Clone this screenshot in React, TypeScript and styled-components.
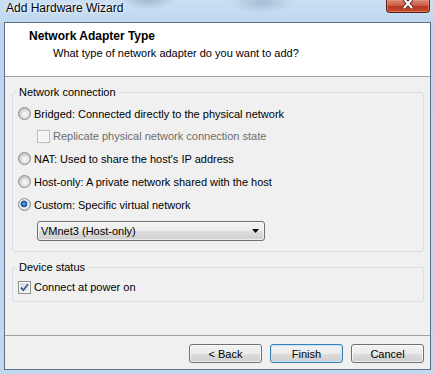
import * as React from 'react';
import styled, { createGlobalStyle } from 'styled-components';

const GlobalStyle = createGlobalStyle`
  * { box-sizing: border-box; }
  html, body { margin: 0; padding: 0; }
  body { width: 434px; height: 374px; overflow: hidden; background: #c2d9f0; }
`;

const Frame = styled.div`
  width: 434px;
  height: 374px;
  display: flex;
  flex-direction: column;
  font-family: 'Liberation Sans', Arial, sans-serif;
  color: #000;
  background:
    radial-gradient(ellipse 34px 12px at 148px 0px, rgba(70, 95, 115, 0.3), transparent 80%),
    radial-gradient(ellipse 40px 14px at 262px 2px, rgba(60, 90, 110, 0.25), transparent 80%),
    linear-gradient(180deg, #cadff4 0%, #bdd6ef 26px, #c0d8f0 100%);
`;

const TitleBar = styled.div`
  height: 22px;
  flex: none;
  display: flex;
  justify-content: space-between;
  align-items: flex-start;
`;

const Title = styled.span`
  margin: 1px 0 0 6px;
  font-size: 12px;
  line-height: 15px;
  text-shadow: 0 0 5px rgba(255, 255, 255, 0.9), 0 0 2px rgba(255, 255, 255, 0.9);
`;

const CloseButton = styled.div`
  width: 44px;
  height: 13px;
  margin-right: 4px;
  display: flex;
  align-items: flex-start;
  justify-content: center;
  border: 1px solid #5e2218;
  border-top: none;
  border-radius: 0 0 4px 4px;
  background: linear-gradient(180deg, #d98570 0%, #cc5f47 45%, #b8381f 52%, #c44a30 100%);
  box-shadow: inset 0 0 0 1px rgba(240, 160, 140, 0.5);
`;

const Client = styled.div`
  flex: 1;
  margin: 0 3px 4px 4px;
  border: 1px solid #5e6f82;
  background: #f0f0f0;
  display: flex;
  flex-direction: column;
`;

const Header = styled.div`
  height: 54px;
  flex: none;
  background: #fff;
  border-bottom: 1px solid #a0a0a0;
  padding: 6px 0 0 24px;
`;

const HeaderTitle = styled.div`
  font-size: 12px;
  line-height: 15px;
  font-weight: bold;
`;

const HeaderSub = styled.div`
  margin: 2px 0 0 24px;
  font-size: 11px;
  line-height: 14px;
`;

const Body = styled.div`
  flex: 1;
  padding: 8px 6px 0 7px;
  display: flex;
  flex-direction: column;
`;

const Group = styled.fieldset<{ $bottom: number }>`
  margin: 0 0 8px 0;
  min-width: 0;
  border: 1px solid #d5dfe5;
  border-radius: 3px;
  padding: 3px 6px ${p => p.$bottom}px 5px;
  display: flex;
  flex-direction: column;
`;

const Legend = styled.legend`
  margin-left: -2px;
  padding: 0 3px;
  font-size: 11px;
  line-height: 14px;
`;

const Row = styled.label<{ $height: number; $indent?: number; $disabled?: boolean }>`
  height: ${p => p.$height}px;
  display: flex;
  align-items: center;
  gap: 3px;
  padding-left: ${p => p.$indent ?? 0}px;
  font-size: 11px;
  line-height: 14px;
  color: ${p => (p.$disabled ? '#6d6d6d' : '#000')};
`;

const RadioDot = styled.span<{ $checked?: boolean }>`
  width: 13px;
  height: 13px;
  flex: none;
  border-radius: 50%;
  border: 1px solid #8a8c8e;
  background: ${p =>
    p.$checked
      ? 'radial-gradient(circle at 45% 45%, #8fc3f0 0, #2f73c0 1.6px, #1c4f93 3px, #dfe7ee 3.7px, #f4f4f4 4.3px, #d4d4d4 5.5px)'
      : 'radial-gradient(circle at 55% 58%, #fbfbfb 0, #f0f0f0 2px, #d6d6d6 4.6px, #c8c8c8 5.5px)'};
`;

const CheckBox = styled.span<{ $disabled?: boolean }>`
  width: 13px;
  height: 13px;
  flex: none;
  display: flex;
  align-items: center;
  justify-content: center;
  border: 1px solid ${p => (p.$disabled ? '#bcbcbc' : '#8e8f8f')};
  background: ${p => (p.$disabled ? '#f4f4f4' : 'linear-gradient(135deg, #d5d9de 0%, #f4f4f4 100%)')};
  box-shadow: inset 0 0 0 1px ${p => (p.$disabled ? '#fafafa' : '#f6f6f6')};
`;

const Select = styled.div`
  width: 228px;
  height: 20px;
  margin: 5px 0 0 19px;
  padding: 0 5px 0 3px;
  display: flex;
  align-items: center;
  justify-content: space-between;
  border: 1px solid #707070;
  border-radius: 3px;
  background: linear-gradient(180deg, #f2f2f2 0%, #ebebeb 50%, #dddddd 51%, #cfcfcf 100%);
  box-shadow: inset 0 0 0 1px rgba(255, 255, 255, 0.6);
  font-size: 11px;
  line-height: 14px;
`;

const Footer = styled.div`
  height: 34px;
  flex: none;
  border-top: 1px solid #a0a0a0;
  padding: 8px 6px 0 0;
  display: flex;
  justify-content: flex-end;
  align-items: flex-start;
  gap: 8px;
`;

const Button = styled.button<{ $default?: boolean }>`
  width: 73px;
  height: 19px;
  padding: 0;
  border: 1px solid ${p => (p.$default ? '#3c7fb1' : '#707070')};
  border-radius: 3px;
  background: linear-gradient(180deg, #f2f2f2 0%, #ebebeb 50%, #dddddd 51%, #cfcfcf 100%);
  box-shadow: inset 0 0 0 1px ${p => (p.$default ? 'rgba(190, 228, 250, 0.95)' : 'rgba(255, 255, 255, 0.7)')};
  font-family: 'Liberation Sans', Arial, sans-serif;
  font-size: 11px;
  line-height: 14px;
  color: #000;
`;

const Radio: React.FC<{ checked?: boolean; children: React.ReactNode }> = ({ checked, children }) => (
  <Row $height={23}>
    <RadioDot $checked={checked} />
    <span>{children}</span>
  </Row>
);

const Tick = () => (
  <svg width="9" height="9" viewBox="0 0 9 9">
    <path d="M1 4.6 L3.4 7.2 L8 1.2" fill="none" stroke="#3f5695" strokeWidth="1.7" />
  </svg>
);

const App: React.FC = () => (
  <Frame>
    <GlobalStyle />
    <TitleBar>
      <Title>Add Hardware Wizard</Title>
      <CloseButton>
        <svg width="14" height="10" viewBox="0 0 14 10">
          <path d="M3 -1 L11 8 M11 -1 L3 8" stroke="#4a2018" strokeWidth="4" />
          <path d="M3 -1 L11 8 M11 -1 L3 8" stroke="#ffffff" strokeWidth="2.2" />
        </svg>
      </CloseButton>
    </TitleBar>
    <Client>
      <Header>
        <HeaderTitle>Network Adapter Type</HeaderTitle>
        <HeaderSub>What type of network adapter do you want to add?</HeaderSub>
      </Header>
      <Body>
        <Group $bottom={10}>
          <Legend>Network connection</Legend>
          <Radio>Bridged: Connected directly to the physical network</Radio>
          <Row $height={22} $indent={19} $disabled>
            <CheckBox $disabled />
            <span>Replicate physical network connection state</span>
          </Row>
          <Radio>NAT: Used to share the host's IP address</Radio>
          <Radio>Host-only: A private network shared with the host</Radio>
          <Radio checked>Custom: Specific virtual network</Radio>
          <Select>
            <span>VMnet3 (Host-only)</span>
            <svg width="7" height="4" viewBox="0 0 7 4">
              <path d="M0 0 H7 L3.5 4 Z" fill="#000" />
            </svg>
          </Select>
        </Group>
        <Group $bottom={4}>
          <Legend>Device status</Legend>
          <Row $height={20}>
            <CheckBox>
              <Tick />
            </CheckBox>
            <span>Connect at power on</span>
          </Row>
        </Group>
      </Body>
      <Footer>
        <Button>&lt; Back</Button>
        <Button $default>Finish</Button>
        <Button>Cancel</Button>
      </Footer>
    </Client>
  </Frame>
);

export default App;
